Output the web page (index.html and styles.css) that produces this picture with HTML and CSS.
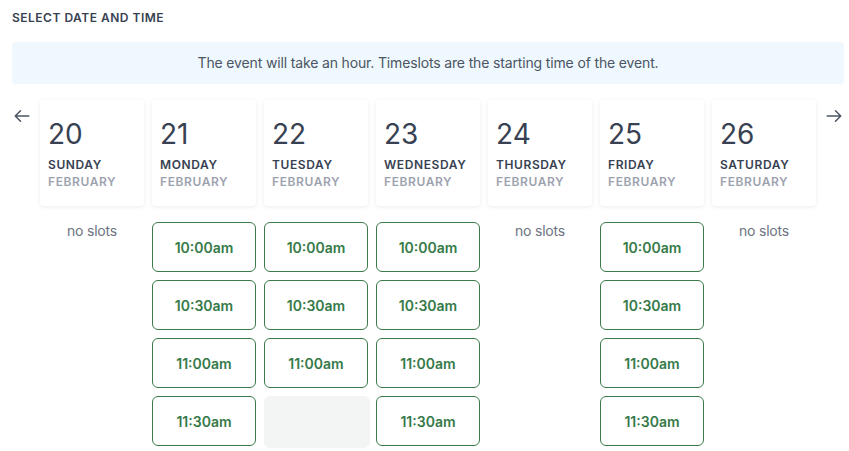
FILE: index.html
```html
<!DOCTYPE html>
<html lang="en">

<head>
    <meta charset="UTF-8">
    <meta name="viewport" content="width=device-width, initial-scale=1.0">
    <title>Select date and time</title>
    <link rel="stylesheet" href="styles.css">
</head>

<body>

    <div class="page">
        <h3 class="title">Select date and time</h3>

        <div class="notice">The event will take an hour. Timeslots are the starting time of the event.</div>

        <div class="week">
            <button class="arrow" aria-label="Previous week">
                <svg width="18" height="18" viewBox="0 0 24 24" fill="none" stroke="currentColor" stroke-width="2" stroke-linecap="round" stroke-linejoin="round"><path d="M10 19l-7-7 7-7M3 12h18" /></svg>
            </button>

            <!-- Domingo -->
            <div class="day">
                <div class="card">
                    <div class="num">20</div>
                    <div class="name">Sunday</div>
                    <div class="month">February</div>
                </div>
                <div class="slots">
                    <div class="none">no slots</div>
                </div>
            </div>

            <div class="day">
                <div class="card">
                    <div class="num">21</div>
                    <div class="name">Monday</div>
                    <div class="month">February</div>
                </div>
                <div class="slots">
                    <button class="slot">10:00am</button>
                    <button class="slot">10:30am</button>
                    <button class="slot">11:00am</button>
                    <button class="slot">11:30am</button>
                </div>
            </div>

            <div class="day">
                <div class="card">
                    <div class="num">22</div>
                    <div class="name">Tuesday</div>
                    <div class="month">February</div>
                </div>
                <div class="slots">
                    <button class="slot">10:00am</button>
                    <button class="slot">10:30am</button>
                    <button class="slot">11:00am</button>
                    <div class="slot empty"></div>
                </div>
            </div>

            <div class="day">
                <div class="card">
                    <div class="num">23</div>
                    <div class="name">Wednesday</div>
                    <div class="month">February</div>
                </div>
                <div class="slots">
                    <button class="slot">10:00am</button>
                    <button class="slot">10:30am</button>
                    <button class="slot">11:00am</button>
                    <button class="slot">11:30am</button>
                </div>
            </div>

            <div class="day">
                <div class="card">
                    <div class="num">24</div>
                    <div class="name">Thursday</div>
                    <div class="month">February</div>
                </div>
                <div class="slots">
                    <div class="none">no slots</div>
                </div>
            </div>

            <div class="day">
                <div class="card">
                    <div class="num">25</div>
                    <div class="name">Friday</div>
                    <div class="month">February</div>
                </div>
                <div class="slots">
                    <button class="slot">10:00am</button>
                    <button class="slot">10:30am</button>
                    <button class="slot">11:00am</button>
                    <button class="slot">11:30am</button>
                </div>
            </div>

            <div class="day">
                <div class="card">
                    <div class="num">26</div>
                    <div class="name">Saturday</div>
                    <div class="month">February</div>
                </div>
                <div class="slots">
                    <div class="none">no slots</div>
                </div>
            </div>

            <button class="arrow" aria-label="Next week">
                <svg width="18" height="18" viewBox="0 0 24 24" fill="none" stroke="currentColor" stroke-width="2" stroke-linecap="round" stroke-linejoin="round"><path d="M14 5l7 7-7 7M21 12H3" /></svg>
            </button>
        </div>
    </div>

</body>

</html>
```

FILE: styles.css
```css
/* Estilos gerais */
body {
    font-family: Inter, "Noto Sans", sans-serif;
    margin: 0;
    padding: 0;
    background-color: #ffffff;
    color: #374151;
}

.page {
    width: 832px;
    padding: 10px 0 0 12px;
}

.title {
    margin: 0;
    font-size: 12px;
    line-height: 16px;
    font-weight: 600;
    text-transform: uppercase;
    letter-spacing: 0.5px;
    color: #374151;
}

/* Aviso */
.notice {
    margin-top: 16px;
    padding: 11px 0;
    background-color: #eff8fe;
    border-radius: 4px;
    text-align: center;
    font-size: 14px;
    line-height: 20px;
    letter-spacing: -0.15px;
    color: #4b5563;
}

/* Semana */
.week {
    display: flex;
    align-items: flex-start;
    gap: 8px;
    margin-top: 16px;
}

.arrow {
    width: 20px;
    height: 18px;
    margin-top: 7px;
    padding: 0;
    border: none;
    background: none;
    color: #4b5563;
    display: flex;
    justify-content: center;
    cursor: pointer;
}

.day {
    width: 104px;
}

.card {
    padding: 16px 8px;
    background: #ffffff;
    border-radius: 4px;
    box-shadow: 0 1px 4px rgba(0, 0, 0, 0.08);
}

.num {
    font-size: 28px;
    line-height: 36px;
    color: #374151;
    margin-bottom: 4px;
}

.name,
.month {
    font-size: 12px;
    line-height: 17px;
    font-weight: 600;
    letter-spacing: 0.6px;
    text-transform: uppercase;
}

.name {
    color: #374151;
}

.month {
    color: #9ca3af;
}

/* Horarios */
.slots {
    display: flex;
    flex-direction: column;
    gap: 8px;
    margin-top: 16px;
}

.none {
    text-align: center;
    font-size: 14px;
    line-height: 20px;
    letter-spacing: -0.2px;
    color: #6b7280;
    margin-top: -1px;
}

.slot {
    height: 50px;
    width: 100%;
    padding: 0;
    background: #ffffff;
    border: 1px solid #3b7a4b;
    border-radius: 6px;
    font-family: inherit;
    font-size: 14px;
    font-weight: 600;
    color: #357a48;
    cursor: pointer;
}

.slot.empty {
    background: #f3f5f4;
    border-color: #f3f5f4;
}
```
